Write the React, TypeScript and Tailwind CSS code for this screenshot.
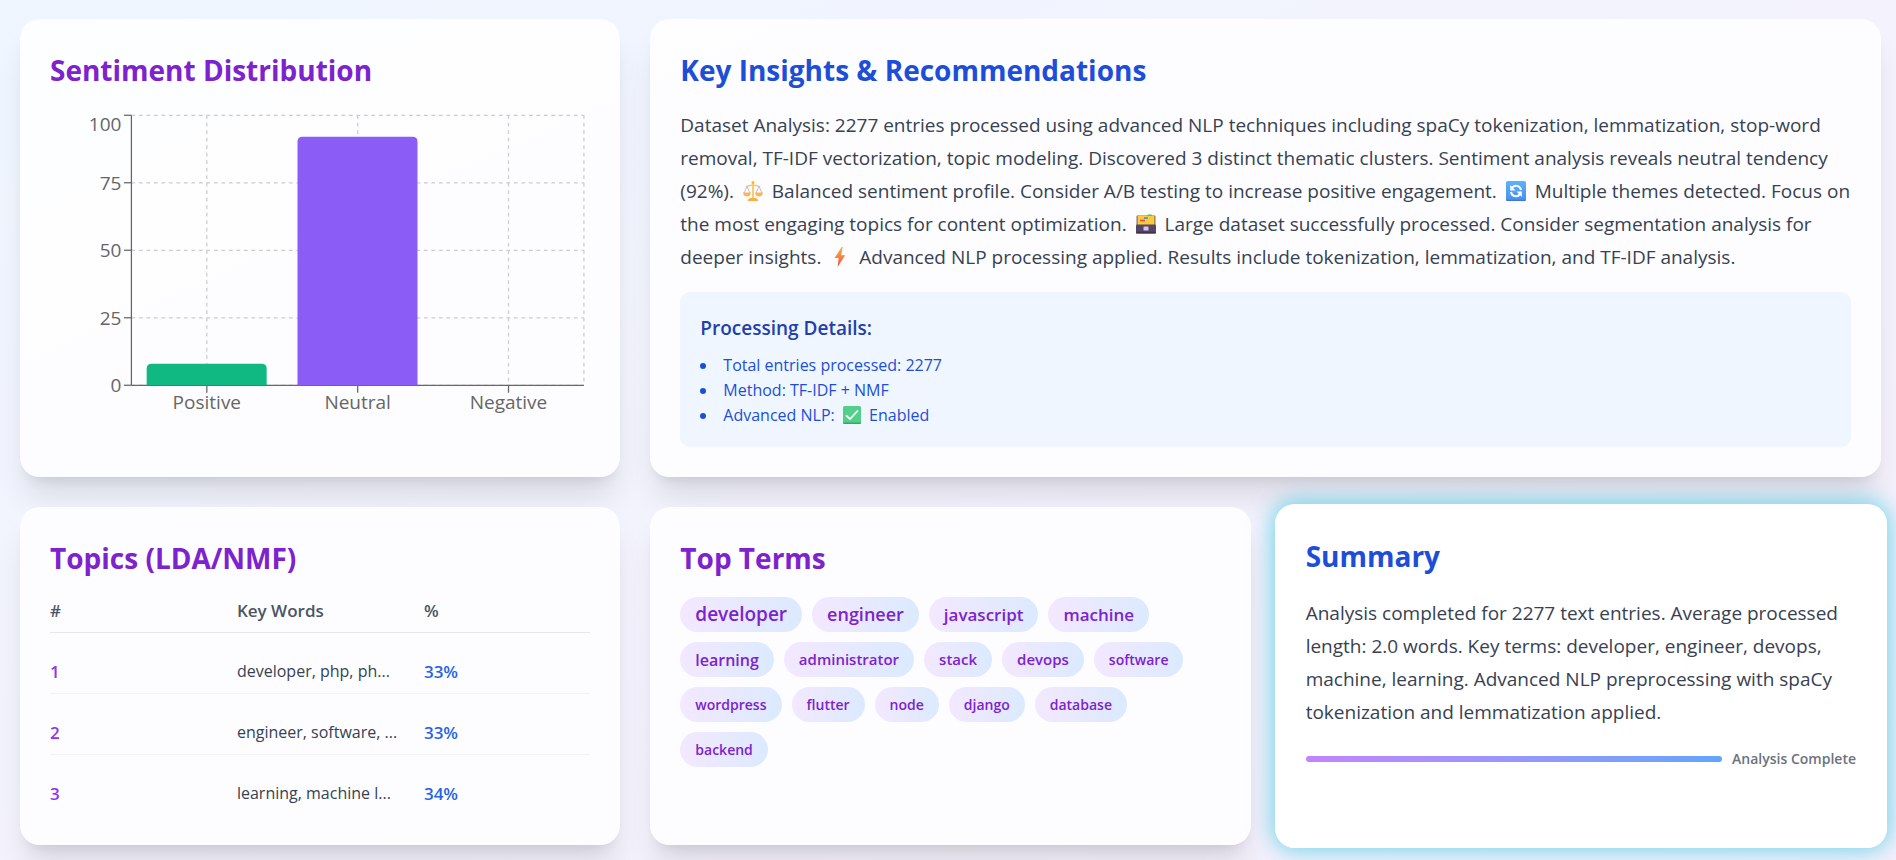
import type { ReactNode } from "react";

const topics = [
  { id: 1, words: "developer, php, ph...", share: "33%" },
  { id: 2, words: "engineer, software, ...", share: "33%" },
  { id: 3, words: "learning, machine l...", share: "34%" },
];

const terms = [
  { label: "developer", size: "text-[19px]" },
  { label: "engineer", size: "text-[18px]" },
  { label: "javascript", size: "text-[17px]" },
  { label: "machine", size: "text-[17px]" },
  { label: "learning", size: "text-[16px]" },
  { label: "administrator", size: "text-[15px]" },
  { label: "stack", size: "text-[15px]" },
  { label: "devops", size: "text-[15px]" },
  { label: "software", size: "text-[14px]" },
  { label: "wordpress", size: "text-[14px]" },
  { label: "flutter", size: "text-[14px]" },
  { label: "node", size: "text-[14px]" },
  { label: "django", size: "text-[14px]" },
  { label: "database", size: "text-[14px]" },
  { label: "backend", size: "text-[14px]" },
];

const sentiment = [
  { name: "Positive", value: 8, color: "#10b981" },
  { name: "Neutral", value: 92, color: "#8b5cf6" },
  { name: "Negative", value: 0, color: "#ef4444" },
];

const cardBase = "rounded-[20px] bg-white/85";
const cardShadow =
  "shadow-[0_25px_31px_-6px_rgba(0,0,0,0.1),0_10px_13px_-8px_rgba(0,0,0,0.1)]";

function Heading({ tone, children }: { tone: "purple" | "blue"; children: ReactNode }) {
  return (
    <h2
      className={`mb-[19px] pt-px text-[28px] leading-[40px] font-bold ${
        tone === "purple" ? "text-[#7e22ce]" : "text-[#1d4ed8]"
      }`}
    >
      {children}
    </h2>
  );
}

function SentimentChart() {
  const left = 81.25;
  const right = 533.75;
  const top = 6.25;
  const bottom = 276.25;
  const band = (right - left) / 3;
  const y = (v: number) => bottom - ((bottom - top) * v) / 100;
  const ticks = [0, 25, 50, 75, 100];
  return (
    <svg viewBox="0 0 540 320" className="h-80 w-full" role="img" aria-label="Sentiment bar chart">
      <g stroke="#ccc" strokeWidth="1.25" strokeDasharray="3.75 3.75">
        {ticks.map((t) => (
          <line key={t} x1={left} x2={right} y1={y(t)} y2={y(t)} />
        ))}
        {sentiment.map((s, i) => (
          <line key={s.name} x1={left + band * (i + 0.5)} x2={left + band * (i + 0.5)} y1={top} y2={bottom} />
        ))}
        <line x1={right} x2={right} y1={top} y2={bottom} />
      </g>
      <g stroke="#666" strokeWidth="1.25">
        <line x1={left} x2={left} y1={top} y2={bottom} />
        <line x1={left} x2={right} y1={bottom} y2={bottom} />
        {ticks.map((t) => (
          <line key={t} x1={left - 7.5} x2={left} y1={y(t)} y2={y(t)} />
        ))}
        {sentiment.map((s, i) => (
          <line key={s.name} x1={left + band * (i + 0.5)} x2={left + band * (i + 0.5)} y1={bottom} y2={bottom + 7.5} />
        ))}
      </g>
      {sentiment.map((s, i) => {
        if (s.value === 0) return null;
        const x = left + band * i + 15.25;
        const w = 120;
        const t = y(s.value);
        return (
          <path
            key={s.name}
            fill={s.color}
            d={`M${x},${bottom} V${t + 5} Q${x},${t} ${x + 5},${t} H${x + w - 5} Q${x + w},${t} ${x + w},${t + 5} V${bottom} Z`}
          />
        );
      })}
      <g fill="#666" className="text-[19px]">
        {ticks.map((t) => (
          <text key={t} x={left - 10} y={t === 100 ? 22 : y(t) + 7} textAnchor="end">
            {t}
          </text>
        ))}
        {sentiment.map((s, i) => (
          <text key={s.name} x={left + band * (i + 0.5)} y={300} textAnchor="middle">
            {s.name}
          </text>
        ))}
      </g>
    </svg>
  );
}

const glyph = "mx-1 inline-block h-5 w-5 align-[-3px]";

function ScalesGlyph() {
  return (
    <svg viewBox="0 0 20 20" className={glyph} role="img" aria-label="Balance">
      <path d="M9.1 2h1.800v15.500H9.100z" fill="#f7c766" />
      <circle cx="10" cy="1.6" r="1.5" fill="#f9b53c" />
      <path d="M3.400 4.800 Q10 2.200 16.600 4.800 L16.400 6 Q10 4 3.600 6z" fill="#f7c766" />
      <path
        d="M4 5 L1.200 12 M4 5 L6.800 12 M16 5 L13.200 12 M16 5 L18.800 12"
        stroke="#c9b0c4"
        strokeWidth="0.9"
        fill="none"
      />
      <path d="M0 11.500h8q-.4 4-4 4T0 11.500zM12 11.500h8q-.4 4-4 4T12 11.500z" fill="#fcb65a" />
      <path d="M4.600 20q.6-3.200 5.400-3.200t5.400 3.200z" fill="#fbb03c" />
    </svg>
  );
}

function RefreshGlyph() {
  return (
    <svg viewBox="0 0 20 20" className={glyph} role="img" aria-label="Refresh">
      <defs>
        <linearGradient id="tile" x1="0" y1="0" x2="0" y2="1">
          <stop offset="0" stopColor="#5ab2fb" />
          <stop offset="1" stopColor="#4a8ef0" />
        </linearGradient>
      </defs>
      <rect width="20" height="20" rx="1.800" fill="url(#tile)" />
      <path d="M0 18.800h20a1.800 1.200 0 0 1-1.800 1.200H1.800A1.800 1.200 0 0 1 0 18.800z" fill="#3b78da" />
      <path
        d="M6 6.800A5 5 0 0 1 15 9M14 13.200A5 5 0 0 1 5 11"
        fill="none"
        stroke="#fff"
        strokeWidth="2"
      />
      <path d="M4.200 4v5.400h5.400zM15.800 16v-5.400h-5.400z" fill="#fff" />
    </svg>
  );
}

function CardBoxGlyph() {
  return (
    <svg viewBox="0 0 20 20" className={glyph} role="img" aria-label="Card file box">
      <rect x="0.6" y="1.500" width="18.800" height="10" rx="1" fill="#5a4a6b" />
      <rect x="1.500" y="1.500" width="17" height="10" rx="0.800" fill="#fcca3d" />
      <path d="M11 2q0-1.600 1.200-1.600h3q1 0 1 1.600z" fill="#3fc48a" />
      <rect x="8" y="3.200" width="4" height="1.600" fill="#3f8fe8" />
      <rect x="4" y="5.600" width="5" height="1.800" fill="#f0563f" />
      <rect y="10.500" width="20" height="9" rx="1" fill="#554567" />
      <rect y="17.800" width="20" height="1.700" rx="0.800" fill="#3f3350" />
      <rect x="7.500" y="12.600" width="5" height="4" rx="0.500" fill="#d3c6ea" />
    </svg>
  );
}

function BoltGlyph() {
  return (
    <svg viewBox="0 0 20 20" className={glyph} role="img" aria-label="Lightning">
      <defs>
        <linearGradient id="bolt" x1="0" y1="0" x2="0" y2="1">
          <stop offset="0" stopColor="#fcb23c" />
          <stop offset="1" stopColor="#f0504a" />
        </linearGradient>
      </defs>
      <path d="M11.600 0 L4.600 11 H8.600 L7.600 20 L15.200 8.200 H11.200 L12.800 0z" fill="url(#bolt)" />
    </svg>
  );
}

function CheckGlyph() {
  return (
    <svg viewBox="0 0 18 18" className="mx-1 inline-block h-[18px] w-[18px] align-[-3px]" role="img" aria-label="Yes">
      <rect width="18" height="18" rx="1.500" fill="#52d08a" />
      <path d="M0 16.500h18a1.500 1.500 0 0 1-1.500 1.500h-15A1.500 1.500 0 0 1 0 16.500z" fill="#35a86a" />
      <path d="M3.500 9.800 7 13 14.500 5" fill="none" stroke="#fff" strokeWidth="1.800" strokeLinecap="round" />
    </svg>
  );
}

export default function App() {
  return (
    <main className="grid min-h-screen grid-cols-3 content-start gap-[30px] bg-linear-to-br from-[#eff6ff] via-[#f3f2fd] to-[#f5f0fc] pt-[19px] pr-[15px] pb-[15px] pl-5 font-['Segoe_UI','Open_Sans',sans-serif]">
      <section className={`${cardBase} ${cardShadow} p-[30px]`}>
        <Heading tone="purple">Sentiment Distribution</Heading>
        <SentimentChart />
      </section>

      <section className={`${cardBase} ${cardShadow} col-span-2 p-[30px]`}>
        <Heading tone="blue">Key Insights &amp; Recommendations</Heading>
        <p className="text-[19px] leading-[33px] text-[#374151]">
          Dataset Analysis: 2277 entries processed using advanced NLP techniques including spaCy tokenization,
          lemmatization, stop-word removal, TF-IDF vectorization, topic modeling. Discovered 3 distinct thematic
          clusters. Sentiment analysis reveals neutral tendency (92%). <ScalesGlyph /> Balanced sentiment profile.
          Consider A/B testing to increase positive engagement. <RefreshGlyph /> Multiple themes detected. Focus on the
          most engaging topics for content optimization. <CardBoxGlyph /> Large dataset successfully processed.
          Consider segmentation analysis for deeper insights. <BoltGlyph /> Advanced NLP processing applied. Results
          include tokenization, lemmatization, and TF-IDF analysis.
        </p>
        <div className="mt-[18px] rounded-[10px] bg-[#eff6ff] px-5 pt-[21px] pb-[19px]">
          <h3 className="mb-2.5 text-[19px] leading-[30px] font-semibold text-[#1e40af]">Processing Details:</h3>
          <ul className="list-inside list-disc text-[16px] leading-[25px] text-[#1d4ed8]">
            <li>Total entries processed: 2277</li>
            <li>Method: TF-IDF + NMF</li>
            <li>
              Advanced NLP: <CheckGlyph /> Enabled
            </li>
          </ul>
        </div>
      </section>

      <section className={`${cardBase} ${cardShadow} p-[30px]`}>
        <Heading tone="purple">Topics (LDA/NMF)</Heading>
        <table className="w-full table-fixed border-collapse text-left text-[17px] leading-[25px]">
          <thead>
            <tr className="border-b border-[#e5e7eb] text-[#4b5563]">
              <th className="w-[34.6%] p-0 pt-px pb-[9px] font-semibold">#</th>
              <th className="w-[34.6%] p-0 pt-px pb-[9px] font-semibold">Key Words</th>
              <th className="p-0 pt-px pb-[9px] font-semibold">%</th>
            </tr>
          </thead>
          <tbody>
            {topics.map((t) => (
              <tr key={t.id} className="border-b border-[#f3f4f6] last:border-b-0">
                <td className="p-0 pt-[26px] pb-[9px] font-semibold text-[#9333ea]">{t.id}</td>
                <td className="p-0 pt-[26px] pb-[9px] text-[16px] whitespace-nowrap text-[#374151]">{t.words}</td>
                <td className="p-0 pt-[26px] pb-[9px] font-semibold text-[#2563eb]">{t.share}</td>
              </tr>
            ))}
          </tbody>
        </table>
      </section>

      <section className={`${cardBase} ${cardShadow} p-[30px]`}>
        <Heading tone="purple">Top Terms</Heading>
        <ul className="flex flex-wrap gap-2.5">
          {terms.map((t) => (
            <li
              key={t.label}
              className={`flex h-[35px] items-center rounded-full bg-linear-to-r from-[#f3e8ff] to-[#dbeafe] px-[15px] font-semibold text-[#7e22ce] ${t.size}`}
            >
              {t.label}
            </li>
          ))}
        </ul>
      </section>

      <section className="-mx-1.5 -my-[3px] rounded-[20px] bg-white/95 p-[31px] shadow-[0_0_22px_3px_rgba(34,195,220,0.6)]">
        <Heading tone="blue">Summary</Heading>
        <p className="pt-0.5 text-[19px] leading-[33px] text-[#374151]">
          Analysis completed for 2277 text entries. Average processed length: 2.0 words. Key terms: developer,
          engineer, devops, machine, learning. Advanced NLP preprocessing with spaCy tokenization and lemmatization
          applied.
        </p>
        <div className="mt-5 flex items-center gap-2.5">
          <div className="h-1.5 flex-1 rounded-full bg-linear-to-r from-[#c084fc] to-[#60a5fa]" />
          <span className="text-[14px] leading-5 font-semibold text-[#6b7280]">Analysis Complete</span>
        </div>
      </section>
    </main>
  );
}
